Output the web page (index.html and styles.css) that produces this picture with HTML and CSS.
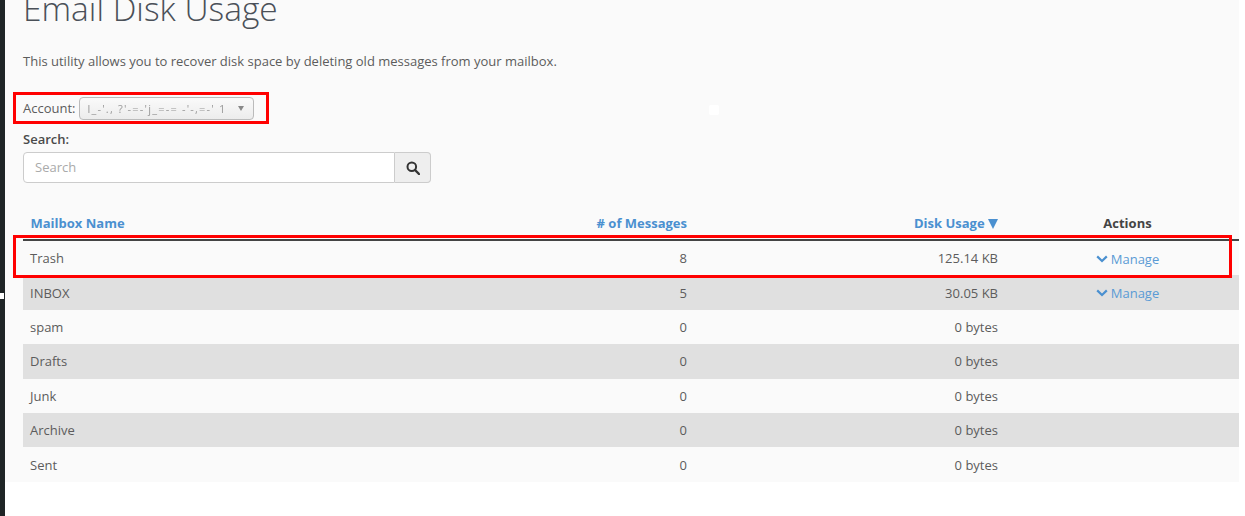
FILE: index.html
```html
<!DOCTYPE html>
<html lang="en">
<head>
<meta charset="utf-8">
<title>Email Disk Usage</title>
<link rel="stylesheet" href="styles.css">
</head>
<body>
<div class="strip"><span class="strip-mark"></span></div>
<main class="page">
  <h1 class="title">Email Disk Usage</h1>
  <p class="intro">This utility allows you to recover disk space by deleting old messages from your mailbox.</p>
  <div class="account">
    <label class="account-label">Account:</label>
    <div class="select"><span class="select-value">l_-'., ?'-=-'j_=-= -'-,=-' 1</span><span class="caret"></span></div>
    <span class="redbox redbox-account"></span>
  </div>
  <div class="search-label">Search:</div>
  <div class="search">
    <div class="search-input">Search</div>
    <div class="search-btn">
      <svg width="14" height="14" viewBox="0 0 14 14"><circle cx="5.8" cy="5.8" r="4.3" fill="none" stroke="#333" stroke-width="2"/><path d="M9 9l4 4" stroke="#333" stroke-width="2.4" stroke-linecap="round"/></svg>
    </div>
  </div>
  <span class="dot"></span>
  <div class="table-wrap">
    <table class="table">
      <colgroup><col class="col-name"><col class="col-msg"><col class="col-disk"><col class="col-act"></colgroup>
      <thead>
        <tr>
          <th class="c-name"><a>Mailbox Name</a></th>
          <th class="c-num"><a># of Messages</a></th>
          <th class="c-num"><a>Disk Usage <span class="sort"></span></a></th>
          <th class="c-act">Actions</th>
        </tr>
      </thead>
      <tbody>
        <tr><td>Trash</td><td class="c-num">8</td><td class="c-num">125.14 KB</td><td class="c-act"><a class="manage"><svg width="12" height="8" viewBox="0 0 12 8"><path d="M1.2 1.4L6 6l4.8-4.6" fill="none" stroke="#4a90d0" stroke-width="2.2"/></svg>Manage</a></td></tr>
        <tr><td>INBOX</td><td class="c-num">5</td><td class="c-num">30.05 KB</td><td class="c-act"><a class="manage"><svg width="12" height="8" viewBox="0 0 12 8"><path d="M1.2 1.4L6 6l4.8-4.6" fill="none" stroke="#4a90d0" stroke-width="2.2"/></svg>Manage</a></td></tr>
        <tr><td>spam</td><td class="c-num">0</td><td class="c-num">0 bytes</td><td></td></tr>
        <tr><td>Drafts</td><td class="c-num">0</td><td class="c-num">0 bytes</td><td></td></tr>
        <tr><td>Junk</td><td class="c-num">0</td><td class="c-num">0 bytes</td><td></td></tr>
        <tr><td>Archive</td><td class="c-num">0</td><td class="c-num">0 bytes</td><td></td></tr>
        <tr><td>Sent</td><td class="c-num">0</td><td class="c-num">0 bytes</td><td></td></tr>
      </tbody>
    </table>
    <span class="redbox redbox-row"></span>
  </div>
</main>
</body>
</html>
```
FILE: styles.css
```css
html, body { margin: 0; padding: 0; background: #fff; }
body { display: flex; align-items: flex-start; width: 1245px; height: 516px; overflow: hidden; font-family: "Open Sans", sans-serif; font-size: 13px; color: #5c5c5c; }
.strip { flex: none; width: 5px; height: 516px; background: #1f2526; position: relative; }
.strip-mark { position: absolute; left: 0; top: 293px; width: 4px; height: 6px; background: #fff; }
.page { flex: none; width: 1234px; height: 482px; background: #fafafa; position: relative; padding-left: 18px; box-sizing: border-box; }
.title { margin: -12px 0 0; font-size: 33.5px; line-height: 40px; font-weight: 300; color: #4a5058; }
.intro { margin: 23px 0 0; line-height: 20px; }
.account { position: relative; display: flex; align-items: center; gap: 3px; margin-top: 26px; height: 22px; }
.select { width: 175px; height: 23px; box-sizing: border-box; border: 1px solid #bbb; border-radius: 4px; background: linear-gradient(#fafafa, #ececec); display: flex; align-items: center; justify-content: space-between; padding: 0 9px 0 8px; }
.select-value { font-size: 11px; letter-spacing: 1.2px; color: #999; white-space: pre; filter: blur(0.5px); }
.caret { width: 0; height: 0; border-left: 3.5px solid transparent; border-right: 3.5px solid transparent; border-top: 5px solid #888; }
.redbox { position: absolute; border: 3px solid #f00; box-sizing: border-box; pointer-events: none; }
.redbox-account { left: -10px; top: -5px; width: 256px; height: 32px; }
.search-label { margin-top: 11px; line-height: 18px; font-weight: 600; color: #4a4a4a; }
.search { display: flex; width: 408px; height: 31px; margin-top: 4px; box-sizing: border-box; }
.search-input { flex: 1; border: 1px solid #ccc; border-radius: 4px 0 0 4px; background: #fff; color: #aaa; line-height: 29px; padding-left: 11px; }
.search-btn { width: 36px; box-sizing: border-box; border: 1px solid #ccc; border-left: 0; border-radius: 0 4px 4px 0; background: #eee; display: flex; align-items: center; justify-content: center; }
.dot { position: absolute; left: 704px; top: 105px; width: 10px; height: 10px; border-radius: 2px; background: #fff; }
.table-wrap { position: relative; margin-top: 23px; }
.table { width: 1216px; border-collapse: collapse; table-layout: fixed; }
.col-name { width: 300px; }
.col-msg { width: 364px; }
.col-disk { width: 311px; }
.col-act { width: 241px; }
.table th { height: 33px; padding: 0 7.5px; font-weight: 700; color: #444; border-bottom: 2px solid #444; }
.table th a { color: #4a90d0; }
.table td { height: 34.4px; padding: 0 7px; box-sizing: border-box; }
.table tbody tr:first-child td { height: 35.4px; }
.table tbody tr:nth-child(even) { background: #e0e0e0; }
.c-name { text-align: left; }
.table .c-num { text-align: right; padding-right: 0; }
.table .c-act { text-align: center; padding-left: 18px; padding-right: 0; }
.sort { display: inline-block; width: 0; height: 0; border-left: 5px solid transparent; border-right: 5px solid transparent; border-top: 10px solid #4a90d0; vertical-align: -1px; }
.manage { color: #5a9bd5; display: inline-flex; align-items: center; gap: 3px; }
.redbox-row { left: -10px; top: 29px; width: 1219px; height: 43px; }
```
